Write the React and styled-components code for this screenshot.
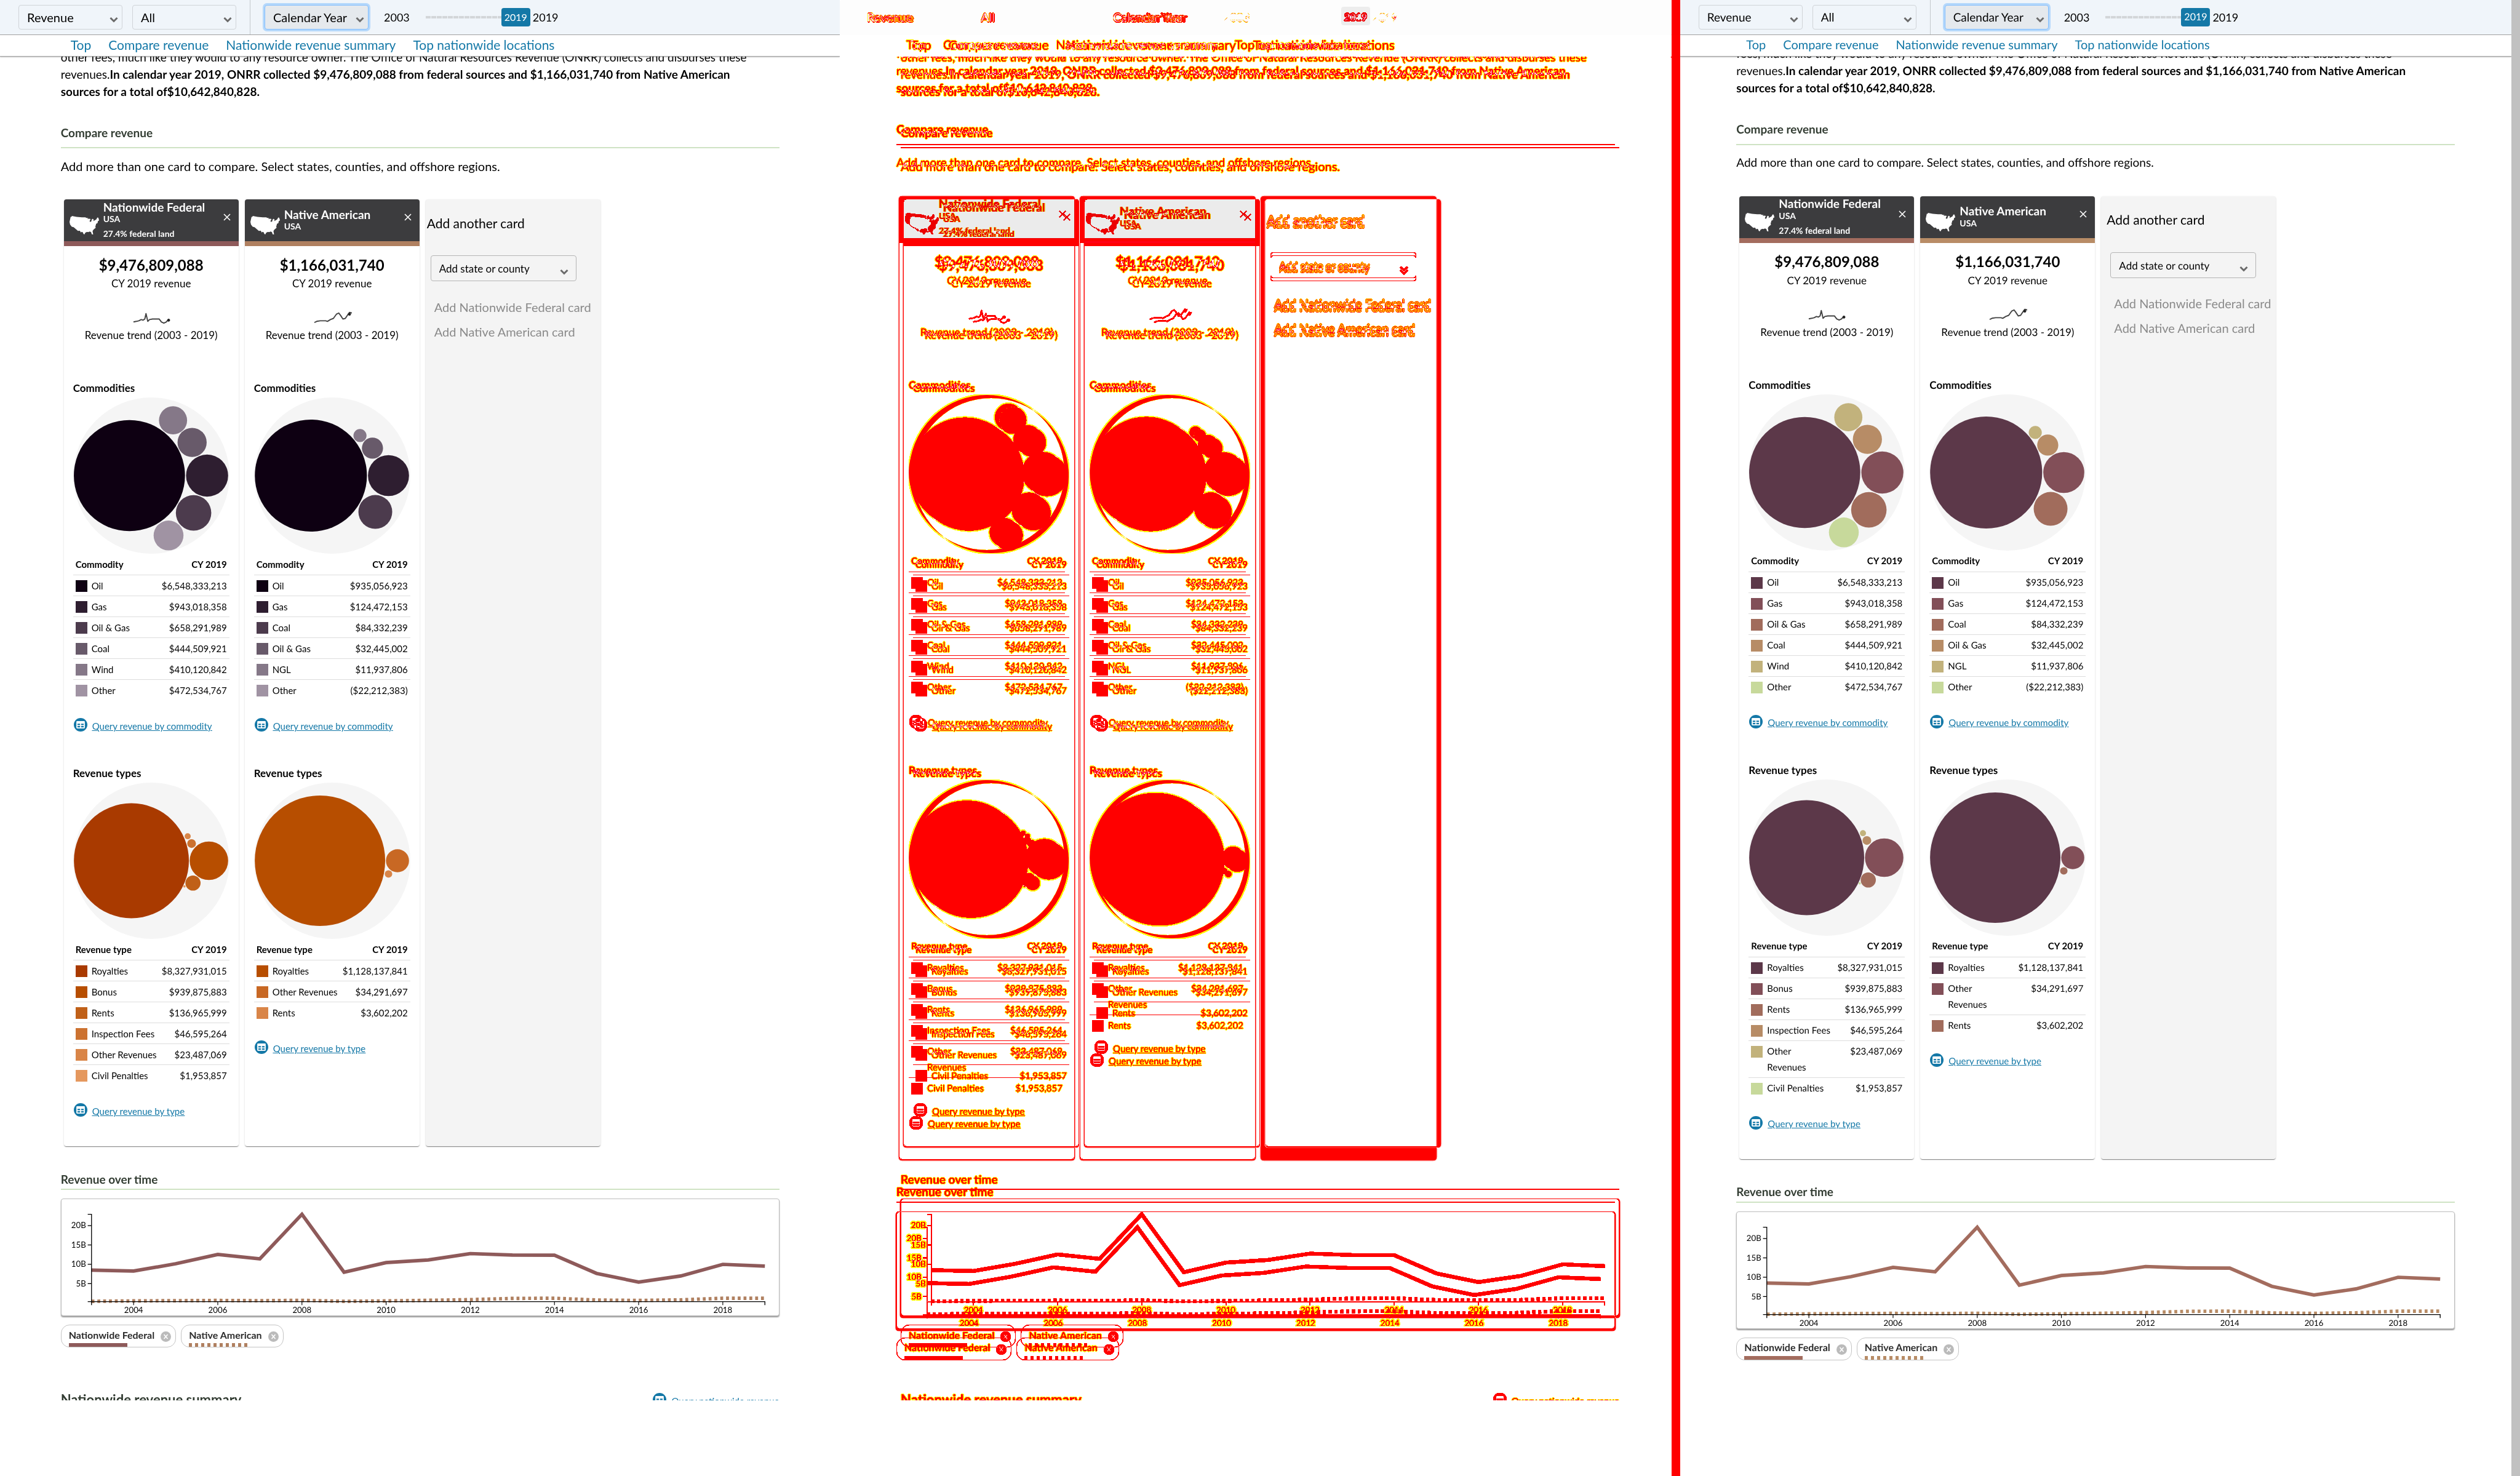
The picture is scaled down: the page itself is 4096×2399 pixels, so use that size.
import React, { useId } from "react";
import styled, { createGlobalStyle, css } from "styled-components";

const GlobalStyle = createGlobalStyle`
  *, *::before, *::after { box-sizing: border-box; }
  body { margin: 0; background: #fff; }
  body, button, select { font-family: Lato, "Open Sans", sans-serif; }
`;

/* ---------- palettes and data ---------- */

const BUILDS = {
  base: {
    lines: ["#8e5a5a", "#b08060"],
    commodity: ["#0e0012", "#2e1e30", "#4c3b4d", "#685a6a", "#857888", "#a093a3"],
    type: ["#a93a00", "#b74e00", "#c06018", "#cc7230", "#d98548", "#e5985e"],
    nativeType: ["#b74e00", "#c86824", "#d98548"],
    intro: "other fees, much like they would to any resource owner. The Office of Natural Resources Revenue (ONRR) collects and disburses these",
    introShift: -13,
    labelMax: 140,
    addInset: 0,
    textSize: 20,
    navSize: 21,
    summary: true,
    precise: false,
  },
  candidate: {
    lines: ["#a36c5e", "#b88c66"],
    commodity: ["#5c3849", "#824f58", "#a16c5c", "#b78c66", "#c2b27c", "#c7d99b"],
    type: ["#5c3849", "#824f58", "#a16c5c", "#b78c66", "#c2b27c", "#c7d99b"],
    nativeType: ["#5c3849", "#824f58", "#a16c5c"],
    intro: "fees, much like they would to any resource owner. The Office of Natural Resources Revenue (ONRR) collects and disburses these",
    introShift: -18,
    labelMax: 104,
    addInset: 7,
    textSize: 19,
    navSize: 20,
    summary: false,
    precise: true,
  },
};

const FEDERAL = {
  name: "Nationwide Federal",
  land: "27.4% federal land",
  total: "$9,476,809,088",
  trend: "M1 22l5-1 4-1 4-2 3 1 3-2 2-9 3 13 3-3 5-1 5 0 6 0 4 5 4 2 4-2 3-3 3 0",
  dot: [60, 19],
  commodities: [
    ["Oil", "$6,548,333,213"], ["Gas", "$943,018,358"], ["Oil & Gas", "$658,291,989"],
    ["Coal", "$444,509,921"], ["Wind", "$410,120,842"], ["Other", "$472,534,767"],
  ],
  commodityBubbles: [
    [96.4, 134, 95.3], [229.6, 134, 36.1], [206.4, 198, 30.4],
    [203.9, 77.1, 25], [171.2, 39.2, 24.1], [163.5, 236.7, 25.6],
  ],
  types: [
    ["Royalties", "$8,327,931,015"], ["Bonus", "$939,875,883"], ["Rents", "$136,965,999"],
    ["Inspection Fees", "$46,595,264"], ["Other Revenues", "$23,487,069"], ["Civil Penalties", "$1,953,857"],
  ],
  typeBubbles: [
    [99.8, 134, 98.6], [232.7, 134, 33], [205.4, 172.3, 13],
    [203, 104.5, 7.5], [196.3, 92, 5.2], [190.7, 178, 2],
  ],
};

const NATIVE = {
  name: "Native American",
  total: "$1,166,031,740",
  trend: "M1 23l4-2 6-1 5 0 4 0 3 1 5-3 5-2 5-7 4-2 3 4 4 6 4-1 4-6 3-4 4 1",
  dot: [60, 9],
  commodities: [
    ["Oil", "$935,056,923"], ["Gas", "$124,472,153"], ["Coal", "$84,332,239"],
    ["Oil & Gas", "$32,445,002"], ["NGL", "$11,937,806"], ["Other", "($22,212,383)"],
  ],
  commodityBubbles: [
    [97.4, 134, 96.1], [230.5, 134, 35.2], [207.9, 196.3, 29],
    [203, 87, 18.1], [181.6, 65.3, 11.2],
  ],
  types: [["Royalties", "$1,128,137,841"], ["Other Revenues", "$34,291,697"], ["Rents", "$3,602,202"]],
  typeBubbles: [[113, 134, 111.8], [245.9, 134, 19.8], [230.5, 156.7, 6.4]],
};

const FEDERAL_Y = [122, 123.5, 111, 95, 102.5, 26, 125.5, 109, 104.5, 93.5, 96, 96.2, 127.5, 142.5, 132, 112, 115];
const NATIVE_Y = [175.5, 174.8, 174.4, 174, 174.4, 173.8, 175.5, 174.8, 173.8, 172.6, 170.5, 170.2, 173.3, 174, 173, 170.2, 170.2];
const AXIS_X = 51.5;
const STEP = 72.28;
const toPoints = (ys) => ys.map((y, i) => `${AXIS_X + i * STEP},${y}`).join(" ");

/* ---------- page frame ---------- */

const Screen = styled.main`
  display: grid;
  grid-template-columns: repeat(3, minmax(0, 1fr));
  min-height: 100vh;
  overflow: hidden;
`;

/* On the compare layers a blue-only difference maps to yellow, any other to red. */
const diffInk = css`
  text-shadow: 1px 0 #ffff00, -1px 0 #ffff00, 0 1px #ffff00, 0 -1px #ffff00;
  h2, h3, p, a, th, td, span, label, select, button, strong { color: #efef00; }
  [data-dark] * { color: #50503e; text-shadow: 1px 0 #3c3c78, -1px 0 #3c3c78; }
  svg text { fill: #e8e800; stroke: #ffff00; stroke-width: 2px; paint-order: stroke; }
  svg[role="img"] circle { stroke: #f5f500; stroke-width: 2px; }
  svg[role="img"] circle:first-child { stroke: #ffff00; }
`;

const Frame = styled.section`
  display: flex;
  flex-direction: column;
  min-width: 0;
  background: #fff;
  color: #000;
  font-size: 19px;
  line-height: 28px;
  overflow: hidden;
  text-rendering: ${(p) => (p.$precise ? "geometricPrecision" : "auto")};
  ${(p) => p.$diff && diffInk}
`;

const Cropped = styled.div`
  display: grid;
  align-content: stretch;
  aspect-ratio: 3 / 5;
  overflow: hidden;
`;

const Scrolled = styled.div`
  display: grid;
  grid-template-columns: minmax(0, 1fr) 14px;
  height: 100%;
  background: #fff;
`;

const ScrollTrack = styled.div`
  background: #c1c1c1;
`;

const Toolbar = styled.header`
  display: flex;
  align-items: center;
  height: 57px;
  flex: none;
  padding-left: 30px;
  background: #f0f5fa;
  border-bottom: 1px solid #a3a3a3;
  box-shadow: 0 1px 2px rgba(0, 0, 0, 0.25);
  position: relative;
`;

const SelectBox = styled.div`
  display: grid;
  width: ${(p) => p.$width}px;
  margin: ${(p) => p.$margin || "0"};
`;

const Select = styled.select`
  grid-area: 1 / 1;
  appearance: none;
  width: 100%;
  height: ${(p) => p.$height}px;
  padding: 0 13px;
  border: 1px solid ${(p) => (p.$focused ? "#80bdff" : p.$dark ? "#b5b5b5" : "#d0d4d8")};
  border-radius: 4px;
  background: ${(p) => (p.$focused ? "#e5e9ed" : "transparent")};
  box-shadow: ${(p) => (p.$focused ? "0 0 0 3px #b5d8fb" : "none")};
  font-size: ${(p) => p.$size}px;
  color: #000;
  text-shadow: inherit;
  text-rendering: inherit;
`;

const Chevron = styled.svg`
  grid-area: 1 / 1;
  justify-self: end;
  align-self: center;
  width: 14px;
  height: 20px;
  margin: ${(p) => p.$drop || 7}px ${(p) => p.$right || 7}px 0 0;
  fill: none;
  stroke: #6b6b6b;
  stroke-width: 3;
  pointer-events: none;
`;

const Divider = styled.div`
  align-self: stretch;
  width: 1px;
  background: #c4c8cc;
  margin: 0 23px 0 22px;
`;

const YearRange = styled.div`
  display: flex;
  align-items: center;
  margin-left: 25px;
  font-size: 18px;
`;

const Ticks = styled.div`
  height: 4px;
  width: 123px;
  margin-left: 26px;
  background: repeating-linear-gradient(90deg, #d3d6d9 0 8px, transparent 8px 9px);
`;

const YearBadge = styled.span`
  width: 47px;
  line-height: 30px;
  margin-right: 4px;
  border-radius: 4px;
  background: #1478a7;
  color: #fff;
  font-size: 16px;
  text-align: center;
`;

const PageNav = styled.nav`
  flex: none;
  height: 35px;
  padding-bottom: 3px;
  background: #fff;
  border-bottom: 1px solid #a3a3a3;
  box-shadow: 0 1px 2px rgba(0, 0, 0, 0.25);
  position: relative;
`;

const Container = styled.div`
  width: 100%;
  max-width: 1168px;
  margin: 0 auto;
`;

const NavList = styled(Container)`
  display: flex;
  gap: 28px;
  padding: 2px 16px 0;
  font-size: ${(p) => p.$size}px;
`;

const NavLink = styled.a`
  color: #1478a7;
  text-decoration: none;
`;

const Body = styled.div`
  flex: 1;
  min-height: 0;
  overflow: hidden;
`;

const Intro = styled.p`
  margin: ${(p) => p.$shift}px 0 38px;
`;

const SectionTitle = styled.h2`
  margin: ${(p) => p.$before || 0}px 0 ${(p) => p.$after}px;
  padding-bottom: ${(p) => p.$pad || 0}px;
  border-bottom: 2px solid #cfe3c4;
  font-size: 19px;
  line-height: 30px;
  font-weight: 700;
  color: #323c32;
`;

const Lead = styled.p`
  margin: 0 0 40px;
  font-size: ${(p) => p.$size}px;
`;

/* ---------- cards ---------- */

const Cards = styled.div`
  display: flex;
  gap: 10px;
  padding: 0 5px;
`;

const cardBox = css`
  width: 284px;
  border-radius: 4px;
  overflow: hidden;
  box-shadow: 0 2px 1px -1px rgba(0, 0, 0, 0.3), 0 1px 1px rgba(0, 0, 0, 0.18), 0 1px 3px rgba(0, 0, 0, 0.12);
`;

const Card = styled.article`
  ${cardBox}
  background: #fff;
`;

const CardHead = styled.header`
  display: grid;
  grid-template-columns: 48px 1fr 22px;
  column-gap: 7px;
  align-items: center;
  height: 76px;
  padding: 0 8px 0 9px;
  background: #3c3c3e;
  border-bottom: 8px solid ${(p) => p.$accent};
  color: #fff;
`;

const CardName = styled.h3`
  margin: 0;
  font-size: 19px;
  line-height: 20px;
  font-weight: 700;
`;

const CardPlace = styled.p`
  margin: 0;
  font-size: 14px;
  line-height: 18px;
  font-weight: 700;
`;

const CardLand = styled(CardPlace)`
  margin-top: 6px;
`;

const MapIcon = styled.svg`
  width: 48px;
  height: 30px;
  margin-top: 16px;
  fill: #fff;
`;

const CloseButton = styled.button`
  display: grid;
  place-items: center;
  align-self: start;
  width: 22px;
  height: 22px;
  margin-top: 18px;
  padding: 0;
  border: 0;
  background: none;
  svg { width: 12px; height: 12px; stroke: #fff; stroke-width: 1.6; fill: none; }
`;

const CardBody = styled.div`
  display: flex;
  flex-direction: column;
  padding: 14px 15px 46px;
`;

const Total = styled.p`
  margin: 0;
  text-align: center;
  font-size: 24px;
  line-height: 34px;
  font-weight: 700;
`;

const Caption = styled.p`
  margin: 0 0 ${(p) => p.$after || 0}px;
  text-align: center;
  font-size: 17px;
  line-height: 26px;
`;

const Spark = styled.svg`
  align-self: center;
  width: 60px;
  height: 30px;
  overflow: visible;
  fill: none;
  stroke: #444;
  stroke-width: 2;
`;

const ChartTitle = styled.h3`
  margin: 0 0 2px;
  font-size: 17px;
  line-height: 26px;
  font-weight: 700;
`;

const Bubbles = styled.svg`
  display: block;
  width: 100%;
  height: auto;
`;

const Table = styled.table`
  width: 100%;
  border-collapse: collapse;
  font-size: 15px;
  line-height: 26px;
`;

const Cell = styled.td`
  padding: 4px ${(p) => (p.$right ? 4 : 0)}px 3px 4px;
  border-top: 1px solid #ddd;
  text-align: ${(p) => (p.$right ? "right" : "left")};
  vertical-align: top;
  color: #000;
`;

const HeadCell = styled.th`
  padding: 4px;
  text-align: ${(p) => (p.$right ? "right" : "left")};
  font-weight: 700;
`;

const RowLabel = styled.span`
  display: grid;
  grid-template-columns: 19px 1fr;
  gap: 7px;
  max-width: ${(p) => p.$max + 26}px;
`;

const Swatch = styled.i`
  width: 19px;
  height: 19px;
  margin-top: 4px;
  background: ${(p) => p.$color};
`;

const QueryLink = styled.a`
  display: flex;
  align-items: center;
  gap: 8px;
  margin: ${(p) => p.$margin || "0"};
  font-size: 15px;
  line-height: 26px;
  color: #1478a7;
  text-underline-offset: 1px;
  svg { width: 22px; height: 22px; flex: none; margin-left: 1px; }
  span { text-decoration: underline; padding-top: 4px; line-height: 22px; }
`;

const AddCard = styled.aside`
  ${cardBox}
  padding: 25px 0 0 ${(p) => p.$inset}px;
  background: #f4f4f4;
`;

const AddTitle = styled.h3`
  margin: 0 0 38px 2px;
  font-size: 21px;
  line-height: 28px;
  font-weight: 400;
`;

const AddButton = styled.button`
  display: block;
  margin-left: 14px;
  padding: 0;
  border: 0;
  background: none;
  font-size: 20px;
  line-height: 40px;
  color: #8a8a8a;
  text-shadow: inherit;
  text-rendering: inherit;
  white-space: nowrap;
`;

/* ---------- chart ---------- */

const ChartPanel = styled.figure`
  margin: 0 0 14px;
  border: 1px solid #bdbdbd;
  border-radius: 4px;
  box-shadow: 0 2px 2px rgba(0, 0, 0, 0.4);
  background: #fff;
`;

const Chart = styled.svg`
  display: block;
  width: 100%;
  height: auto;
  font-family: Lato, sans-serif;
  font-size: 14px;
`;

const Legend = styled.div`
  display: flex;
  gap: 8px;
  margin-bottom: 69px;
`;

const Chip = styled.div`
  display: grid;
  grid-template-columns: auto 17px;
  column-gap: 10px;
  height: 37px;
  padding: 3px 7px 0 12px;
  border: 1px solid #c4c4c4;
  border-radius: 14px;
  font-size: 16px;
  line-height: 25px;
`;

const ChipName = styled.span`
  font-weight: 700;
  color: #2b2b2b;
`;

const ChipClose = styled.button`
  grid-row: 1 / 3;
  grid-column: 2;
  width: 17px;
  height: 17px;
  margin-top: 7px;
  padding: 0;
  border: 0;
  background: none;
  svg { display: block; width: 17px; height: 17px; }
`;

const ChipLine = styled.i`
  grid-column: 1;
  width: 95px;
  height: 6px;
  background: ${(p) => (p.$dotted ? `repeating-linear-gradient(90deg, ${p.$color} 0 5px, transparent 5px 10px)` : p.$color)};
`;

const SummaryRow = styled.div`
  display: flex;
  justify-content: space-between;
`;

const SummaryTitle = styled.h2`
  margin: 0;
  font-size: 22px;
  line-height: 32px;
  color: #323c32;
`;

/* ---------- comparison column ---------- */

const Compare = styled.section`
  position: relative;
  min-width: 0;
  overflow: hidden;
`;

const Stack = styled.div`
  display: grid;
  height: 100%;
  isolation: isolate;
  background: #fff;
  filter: url(#change-map);
`;

const Layer = styled.div`
  grid-area: 1 / 1;
  min-width: 0;
  background: #fff;
  mix-blend-mode: ${(p) => (p.$over ? "difference" : "normal")};
`;

const Ghost = styled.div`
  position: absolute;
  left: ${(p) => p.$x}px;
  top: ${(p) => p.$y}px;
  width: ${(p) => p.$w};
  height: ${(p) => p.$h}px;
  background: ${(p) => p.$tone};
  border-radius: 4px;
  mix-blend-mode: multiply;
  pointer-events: none;
`;

const FilterDefs = styled.svg`
  position: absolute;
  width: 0;
  height: 0;
`;

/* ---------- parts ---------- */

function Pick({ label, width, height, size, margin, focused, dark, right, drop }) {
  const id = useId();
  return (
    <SelectBox $width={width} $margin={margin}>
      <Select id={id} aria-label={label} $height={height} $size={size} $focused={focused} $dark={dark} defaultValue={label}>
        <option>{label}</option>
      </Select>
      <Chevron viewBox="0 0 14 20" $right={right} $drop={drop} aria-hidden="true"><path d="M1.5 7l5.5 5.5L12.5 7" /></Chevron>
    </SelectBox>
  );
}

function TableIcon() {
  return (
    <svg viewBox="0 0 24 24" aria-hidden="true">
      <circle cx="12" cy="12" r="12" fill="#1478a7" />
      <rect x="4.5" y="5.5" width="15" height="13" rx="1.5" fill="#fff" />
      <path d="M6.5 10h4.6v2.6H6.5zM12.9 10h4.6v2.6h-4.6zM6.5 14.2h4.6v2.5H6.5zM12.9 14.2h4.6v2.5h-4.6z" fill="#1478a7" />
    </svg>
  );
}

function UsaMap() {
  return (
    <MapIcon viewBox="0 0 50 31" aria-hidden="true">
      <path d="M2 1l1 1 1-2 8 1.500 9 .8h6l1 .8 4 .6-2 1.600 3-.8 3 .6-1 1-1 3 1 1 2-1 .5-3 2-1.500 1.500 2-1 2 3-1.500 2.500-1.500 1.500-3 2 .3.5 3 1.500.9-3 2-.5 3-2.500 1.300-.7 2.800-.6 2 .6 2-3.500 3-1.800 2.600.6 3.400.6 2.600-1.200 1.200-1.600-2.500-.9-3-2.300-.9-2.200.9-2.800-.2-2.500 1.200-1.500 3-1.500-.9-1.500-3-1.700-.5-1.200 1.200-1.800-3.200-3.300.3L7 18.800l-3.200-.6L1 14.500 0 10z" />
    </MapIcon>
  );
}

function BubbleChart({ bubbles, colors, title }) {
  return (
    <Bubbles viewBox="0 0 268 268" role="img" aria-label={title}>
      <circle cx="134" cy="134" r="134" fill="#f5f5f5" />
      {bubbles.map(([x, y, r], i) => <circle key={i} cx={x} cy={y} r={r} fill={colors[i]} />)}
    </Bubbles>
  );
}

function Breakdown({ title, head, rows, bubbles, colors, max, link, linkMargin }) {
  return (
    <>
      <ChartTitle>{title}</ChartTitle>
      <BubbleChart bubbles={bubbles} colors={colors} title={title} />
      <Table>
        <thead><tr><HeadCell>{head}</HeadCell><HeadCell $right>CY 2019</HeadCell></tr></thead>
        <tbody>
          {rows.map(([name, value], i) => (
            <tr key={name}>
              <Cell><RowLabel $max={max}><Swatch $color={colors[i]} /><span>{name}</span></RowLabel></Cell>
              <Cell $right>{value}</Cell>
            </tr>
          ))}
        </tbody>
      </Table>
      <QueryLink href="#query" $margin={linkMargin}><TableIcon /><span>{link}</span></QueryLink>
    </>
  );
}

function RevenueCard({ data, accent, build, typeColors }) {
  return (
    <Card>
      <CardHead $accent={accent} data-dark>
        <UsaMap />
        <div>
          <CardName>{data.name}</CardName>
          <CardPlace>USA</CardPlace>
          {data.land && <CardLand>{data.land}</CardLand>}
        </div>
        <CloseButton aria-label={`Remove ${data.name}`}><svg viewBox="0 0 12 12"><path d="M1 1l10 10M11 1L1 11" /></svg></CloseButton>
      </CardHead>
      <CardBody>
        <Total>{data.total}</Total>
        <Caption $after={28}>CY 2019 revenue</Caption>
        <Spark viewBox="0 0 62 31" aria-hidden="true">
          <path d={data.trend} strokeLinejoin="round" />
          <circle cx={data.dot[0]} cy={data.dot[1]} r="2" fill="#222" stroke="#222" strokeWidth="1" />
        </Spark>
        <Caption $after={60}>Revenue trend (2003 - 2019)</Caption>
        <Breakdown title="Commodities" head="Commodity" rows={data.commodities} bubbles={data.commodityBubbles}
          colors={build.commodity} max={140} link="Query revenue by commodity" linkMargin="27px 0 53px" />
        <Breakdown title="Revenue types" head="Revenue type" rows={data.types} bubbles={data.typeBubbles}
          colors={typeColors} max={build.labelMax} link="Query revenue by type" linkMargin="27px 0 0" />
      </CardBody>
    </Card>
  );
}

function RevenueChart({ colors }) {
  const end = AXIS_X + STEP * 16;
  return (
    <ChartPanel>
      <Chart viewBox="0 0 1232 200" role="img" aria-label="Revenue over time">
        <polyline points={toPoints(FEDERAL_Y)} fill="none" stroke={colors[0]} strokeWidth="6" />
        <polyline points={toPoints(NATIVE_Y)} fill="none" stroke={colors[1]} strokeWidth="6" strokeDasharray="5 5" />
        <path d={`M45 26H${AXIS_X}V182M45 176H${end}V182`} fill="none" stroke="#000" strokeWidth="1.4" />
        {["20B", "15B", "10B", "5B"].map((label, i) => (
          <g key={label}>
            <path d={`M45 ${45.5 + i * 33.2}h6.5`} stroke="#000" strokeWidth="1.4" />
            <text x="42" y={50 + i * 33.2} textAnchor="end">{label}</text>
          </g>
        ))}
        {[2004, 2006, 2008, 2010, 2012, 2014, 2016, 2018].map((year) => {
          const x = AXIS_X + (year - 2003) * STEP;
          return (
            <g key={year}>
              <path d={`M${x} 176v6`} stroke="#000" strokeWidth="1.2" />
              <text x={x} y="195" textAnchor="middle">{year}</text>
            </g>
          );
        })}
      </Chart>
    </ChartPanel>
  );
}

function LegendChip({ name, color, dotted }) {
  return (
    <Chip>
      <ChipName>{name}</ChipName>
      <ChipClose aria-label={`Remove ${name}`}>
        <svg viewBox="0 0 17 17"><circle cx="8.5" cy="8.5" r="8.5" fill="#bbb" /><path d="M5.5 5l6 7M11.5 5l-6 7" stroke="#fff" strokeWidth="1.6" /></svg>
      </ChipClose>
      <ChipLine $color={color} $dotted={dotted} />
    </Chip>
  );
}

function RevenuePage({ build, diff }) {
  const control = { width: 169, height: 40, size: build.textSize };
  return (
    <Frame $precise={build.precise} $diff={diff} inert={diff}>
      <Toolbar>
        <Pick label="Revenue" {...control} margin="0 16px 0 0" />
        <Pick label="All" {...control} />
        <Divider />
        <Pick label="Calendar Year" {...control} focused />
        <YearRange>
          <span>2003</span><Ticks /><YearBadge>2019</YearBadge><span>2019</span>
        </YearRange>
      </Toolbar>
      <PageNav>
        <NavList $size={build.navSize}>
          {["Top", "Compare revenue", "Nationwide revenue summary", "Top nationwide locations"].map((t) => (
            <NavLink key={t} href="#section">{t}</NavLink>
          ))}
        </NavList>
      </PageNav>
      <Body>
        <Container>
          <Intro $shift={build.introShift}>
            {build.intro}<br />
            revenues.<strong>In calendar year 2019, ONRR collected $9,476,809,088 from federal sources and $1,166,031,740 from Native American<br />
            sources for a total of$10,642,840,828.</strong>
          </Intro>
          <SectionTitle $pad={8} $after={15}>Compare revenue</SectionTitle>
          <Lead $size={build.textSize}>Add more than one card to compare. Select states, counties, and offshore regions.</Lead>
          <Cards>
            <RevenueCard data={FEDERAL} accent={build.lines[0]} build={build} typeColors={build.type} />
            <RevenueCard data={NATIVE} accent={build.lines[1]} build={build} typeColors={build.nativeType} />
            <AddCard $inset={build.addInset}>
              <AddTitle>Add another card</AddTitle>
              <Pick label="Add state or county" width={237} height={42} size={17} margin="0 0 22px 8px" right={13} drop={12} dark />
              <AddButton>Add Nationwide Federal card</AddButton>
              <AddButton>Add Native American card</AddButton>
            </AddCard>
          </Cards>
          <SectionTitle $before={39} $after={14}>Revenue over time</SectionTitle>
          <RevenueChart colors={build.lines} />
          <Legend>
            <LegendChip name="Nationwide Federal" color={build.lines[0]} />
            <LegendChip name="Native American" color={build.lines[1]} dotted />
          </Legend>
          {build.summary && (
            <SummaryRow>
              <SummaryTitle>Nationwide revenue summary</SummaryTitle>
              <QueryLink href="#query"><TableIcon /><span>Query nationwide revenue</span></QueryLink>
            </SummaryRow>
          )}
        </Container>
      </Body>
    </Frame>
  );
}

function BaseShot({ diff }) {
  return <Cropped><RevenuePage build={BUILDS.base} diff={diff} /></Cropped>;
}

function CandidateShot({ diff }) {
  return <Scrolled><RevenuePage build={BUILDS.candidate} diff={diff} /><ScrollTrack /></Scrolled>;
}

export default function App() {
  return (
    <>
      <GlobalStyle />
      <FilterDefs aria-hidden="true">
        <filter id="change-map" colorInterpolationFilters="sRGB" x="0" y="0" width="100%" height="100%">
          <feColorMatrix type="matrix" values="0 0 0 0 1  -13 -13 0 0 1  -9 -9 -9 0 1  0 0 0 0 1" />
        </filter>
      </FilterDefs>
      <Screen>
        <BaseShot />
        <Compare>
          <Stack>
            <Layer><BaseShot diff /></Layer>
            <Layer $over><CandidateShot diff /></Layer>
          </Stack>
          <Ghost $x={0} $y={0} $w="100%" $h={57} $tone="#fdfdfd" />
          <Ghost $x={104} $y={324} $w="278px" $h={64} $tone="#ebebeb" />
          <Ghost $x={398} $y={324} $w="278px" $h={64} $tone="#ebebeb" />
          <Ghost $x={815} $y={11} $w="47px" $h={30} $tone="#efefef" />
        </Compare>
        <CandidateShot />
      </Screen>
    </>
  );
}
